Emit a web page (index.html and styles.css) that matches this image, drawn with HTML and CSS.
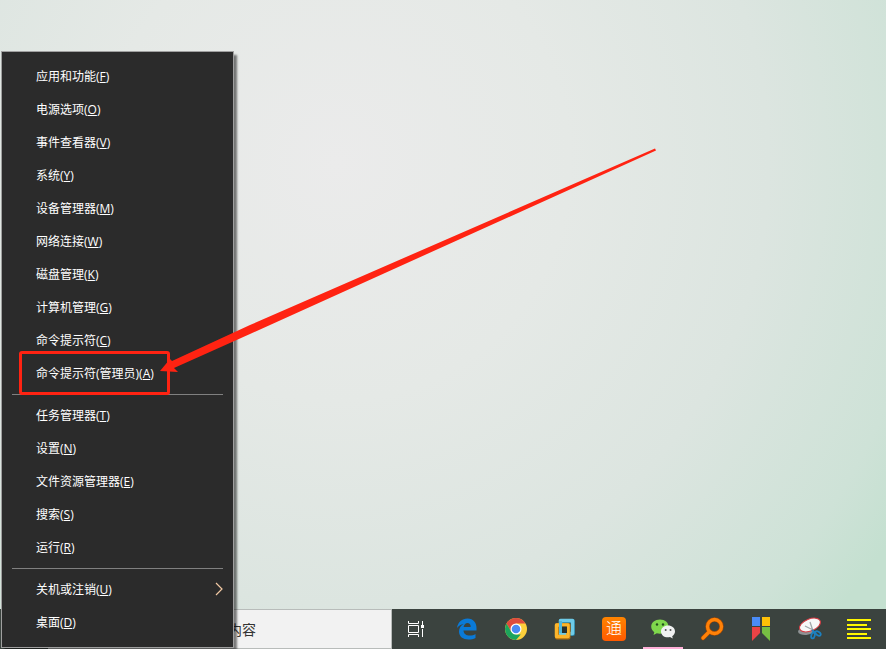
FILE: index.html
```html
<!DOCTYPE html>
<html lang="zh-CN">
<head>
    <meta charset="UTF-8">
    <meta name="viewport" content="width=device-width, initial-scale=1.0">
    <title>桌面</title>
    <link rel="stylesheet" href="styles.css">
</head>
<body>
    <main class="desktop">
        <ul class="menu">
            <li><button type="button">应用和功能(<u>F</u>)</button></li>
            <li><button type="button">电源选项(<u>O</u>)</button></li>
            <li><button type="button">事件查看器(<u>V</u>)</button></li>
            <li><button type="button">系统(<u>Y</u>)</button></li>
            <li><button type="button">设备管理器(<u>M</u>)</button></li>
            <li><button type="button">网络连接(<u>W</u>)</button></li>
            <li><button type="button">磁盘管理(<u>K</u>)</button></li>
            <li><button type="button">计算机管理(<u>G</u>)</button></li>
            <li><button type="button">命令提示符(<u>C</u>)</button></li>
            <li class="marked">
                <button type="button">命令提示符(管理员)(<u>A</u>)</button>
                <svg class="arrow" width="500" height="228" viewBox="157 148 500 228" aria-hidden="true">
                    <path d="M160 371 L170 359 L172 361 L250 325 L655 148.500 L656 150.500 L250 334 L174 368 L178 372 Z" fill="#ff2312"/>
                </svg>
            </li>
            <li class="separator"></li>
            <li><button type="button">任务管理器(<u>T</u>)</button></li>
            <li><button type="button">设置(<u>N</u>)</button></li>
            <li><button type="button">文件资源管理器(<u>E</u>)</button></li>
            <li><button type="button">搜索(<u>S</u>)</button></li>
            <li><button type="button">运行(<u>R</u>)</button></li>
            <li class="separator"></li>
            <li>
                <button type="button">关机或注销(<u>U</u>)
                    <svg class="chevron" width="8" height="14" viewBox="0 0 8 14"><path d="M1 1 L7 7 L1 13" fill="none" stroke="#f3c9a4" stroke-width="1.2"/></svg>
                </button>
            </li>
            <li><button type="button">桌面(<u>D</u>)</button></li>
        </ul>
    </main>

    <footer class="taskbar">
        <input class="search" type="text" aria-label="搜索" placeholder="在这里输入你要搜索的内容">
        <button type="button" class="task" aria-label="任务视图">
            <svg width="18" height="18" viewBox="0 0 18 18" fill="none" stroke="#fff">
                <path d="M1.5 1 V3.5 H11.5 V1 M1.5 17 V14.5 H11.5 V17 M1.5 5.5 H11.5 V12.5 H1.5 Z M15.5 1 V5 M15.5 9 V17"/>
                <path d="M14 5 H17 V8 H14 Z" fill="#fff" stroke="none"/>
            </svg>
        </button>
        <nav class="apps">
            <button type="button" class="task" aria-label="Edge">
                <svg width="22" height="22" viewBox="0 0 22 22">
                    <path d="M1 10 C2 4 6 0.500 11.500 0.500 C17.500 0.500 20.500 5 20.500 10 V12.500 H7.500 C7.700 16 10.500 17.600 13.500 17.600 C16 17.600 18 16.900 19.500 16 V20 C17.500 21.100 15 21.500 12.500 21.500 C7 21.500 3 18.500 3 13.500 C3 10.200 4.800 7.500 7.700 6 C5 6.400 2.700 7.800 1 10 Z M7.600 9 H14.700 C14.700 6.400 13.500 4.900 11.400 4.900 C9.400 4.900 8 6.700 7.600 9 Z" fill="#0a7ad8" fill-rule="evenodd"/>
                </svg>
            </button>
            <button type="button" class="task" aria-label="Chrome">
                <svg width="22" height="22" viewBox="0 0 22 22">
                    <circle cx="11" cy="11" r="11" fill="#fdd03b"/>
                    <path d="M1.500 5.500 A11 11 0 0 1 20.500 5.500 H11 L6.200 13.700 Z" fill="#dd4b3e"/>
                    <path d="M1.500 5.500 L6.200 13.700 L11 16.500 H15.800 L11 22 A11 11 0 0 1 1.500 5.500 Z" fill="#1ca45c"/>
                    <circle cx="11" cy="11" r="5.500" fill="#fff"/>
                    <circle cx="11" cy="11" r="4.300" fill="#4a8af4"/>
                </svg>
            </button>
            <button type="button" class="task" aria-label="VMware">
                <svg width="22" height="22" viewBox="0 0 22 22" fill="none" stroke-linejoin="round">
                    <path d="M7 3 H19 V16 H7 Z" stroke="#2b7f9d" stroke-width="4"/>
                    <path d="M6.500 2.500 H18.500 V15.500 H6.500 Z" stroke="#6ecbe8" stroke-width="3.500"/>
                    <path d="M3 7 H14.500 V19.500 H3 Z" stroke="#b3700f" stroke-width="4"/>
                    <path d="M2.500 7 H14 V18.500 H2.500 Z" stroke="#fcb52b" stroke-width="3.500"/>
                    <path d="M6.500 15 V3" stroke="#4fb6da" stroke-width="3"/>
                    <path d="M8 8.500 H13 V15 H8 Z" fill="#27302e"/>
                </svg>
            </button>
            <button type="button" class="task" aria-label="通"><span class="tong">通</span></button>
            <button type="button" class="task active" aria-label="微信">
                <svg width="24" height="20" viewBox="0 0 24 20">
                    <path d="M9 0.500 C4 0.500 0.200 3.500 0.200 7.600 C0.200 10 1.500 12 3.300 13.200 L2.500 16 L5.800 14.300 C11 16 17.500 13 17.500 7.600 C17.500 3.500 14 0.500 9 0.500 Z" fill="#7fd84c"/>
                    <path d="M17 6.500 C13 6.500 10 9 10 12.500 C10 16.500 14 19.200 19 18.100 L21.800 19.500 L21.200 17.200 C23 16 24 14.400 24 12.500 C24 9 21 6.500 17 6.500 Z" fill="#f0f1f1"/>
                    <circle cx="6" cy="5.500" r="1.200" fill="#24511c"/>
                    <circle cx="12" cy="5.500" r="1.200" fill="#24511c"/>
                    <circle cx="14.700" cy="11" r="1" fill="#555"/>
                    <circle cx="19.500" cy="11" r="1" fill="#555"/>
                </svg>
            </button>
            <button type="button" class="task" aria-label="Everything">
                <svg width="24" height="24" viewBox="0 0 24 24" fill="none" stroke-linecap="round">
                    <path d="M9 15 L3 21" stroke="#a34600" stroke-width="4.500"/>
                    <circle cx="14.500" cy="9.500" r="7" stroke="#a34600" stroke-width="4.500"/>
                    <path d="M9 15 L3 21" stroke="#ff8208" stroke-width="3.300"/>
                    <circle cx="14.500" cy="9.500" r="7" stroke="#ff8208" stroke-width="3.300"/>
                </svg>
            </button>
            <button type="button" class="task" aria-label="书签">
                <svg width="18" height="24" viewBox="0 0 18 24">
                    <path d="M0 0 H8 V9 H0 Z" fill="#4a8cf7"/>
                    <path d="M10 0 H18 V9 H10 Z" fill="#ffc107"/>
                    <path d="M0 10 H8 V16 L0 24 Z" fill="#ea4345"/>
                    <path d="M10 10 H18 V24 L10 16 Z" fill="#77bf43"/>
                </svg>
            </button>
            <button type="button" class="task" aria-label="截图工具">
                <svg width="24" height="24" viewBox="0 0 24 24" fill="none">
                    <ellipse cx="8" cy="14" rx="8" ry="4" transform="rotate(-5 8 14)" fill="#8e9294"/>
                    <ellipse cx="12" cy="8" rx="11" ry="6" transform="rotate(-22 12 8)" fill="#f8f8f8" stroke="#d83a42"/>
                    <path d="M12 5 L15 14 M7 9 L15 13" stroke="#a2a7aa" stroke-width="1.300"/>
                    <ellipse cx="15" cy="18.500" rx="1.700" ry="3" transform="rotate(15 15 18.500)" stroke="#1c80c0" stroke-width="1.800"/>
                    <ellipse cx="20" cy="16.500" rx="1.700" ry="3" transform="rotate(-55 20 16.500)" stroke="#1c80c0" stroke-width="1.800"/>
                    <path d="M14 13 L17 15.500" stroke="#1c80c0" stroke-width="1.700"/>
                </svg>
            </button>
            <button type="button" class="task" aria-label="文本">
                <svg width="24" height="21" viewBox="0 0 24 21">
                    <path d="M0 0 H24 V2 H0 Z M0 5 H20 V7 H0 Z M0 9 H24 V11 H0 Z M0 14 H20 V16 H0 Z M0 18 H24 V20 H0 Z" fill="#fff800"/>
                </svg>
            </button>
        </nav>
    </footer>
</body>
</html>
```

FILE: styles.css
```css
*, *::after {
    box-sizing: border-box;
}
body {
    margin: 0;
    min-height: 100vh;
    display: flex;
    flex-direction: column;
    position: relative;
    overflow: hidden;
    font-family: "Open Sans", "Noto Sans CJK SC", sans-serif;
    background:
        radial-gradient(ellipse 75% 105% at 38% 25%, #ebebeb 0%, #e5e9e6 35%, #dce5e0 65%, #cee2d7 90%, #c4e0d0 100%);
}
.desktop {
    flex: 1;
}
button {
    border: none;
    background: none;
    padding: 0;
    font-family: inherit;
    color: inherit;
}

/* Menu Win+X */
.menu {
    position: absolute;
    left: 1px;
    bottom: 1px;
    z-index: 1;
    width: 233px;
    margin: 0;
    padding: 8px 0;
    list-style: none;
    background-color: #2b2b2b;
    border: 1px solid #a0a0a0;
    box-shadow: 3px 4px 2px rgba(0, 0, 0, 0.5);
    color: #fff;
}
.menu button {
    display: flex;
    align-items: center;
    width: 100%;
    height: 33px;
    padding: 0 10px 1px 34px;
    font-size: 12px;
    text-align: left;
}
.menu button:hover {
    background-color: #414141;
}
.menu u {
    text-underline-offset: 1px;
}
.separator {
    height: 1px;
    margin: 4px 10px;
    background-color: #808080;
}
.chevron {
    margin-left: auto;
}

/* Red frame and arrow */
.marked {
    position: relative;
}
.marked::after {
    content: "";
    position: absolute;
    left: 17px;
    top: -6px;
    width: 151px;
    height: 44px;
    border: 3px solid #ff2312;
    border-radius: 3px;
    pointer-events: none;
}
.arrow {
    position: absolute;
    left: 155px;
    bottom: 14px;
    z-index: 1;
    pointer-events: none;
}

/* Taskbar */
.taskbar {
    display: flex;
    height: 40px;
    padding-left: 48px;
    background-color: #3b433f;
}
.search {
    flex: 0 1 344px;
    min-width: 0;
    padding: 0 39px;
    border: 1px solid #b8bcba;
    border-radius: 0;
    background-color: #f2f2f2;
    font-family: inherit;
    font-size: 14px;
}
.search::placeholder {
    color: #333;
}
.apps {
    display: flex;
    gap: 1px;
    margin-left: 3px;
}
.task {
    display: flex;
    align-items: center;
    justify-content: center;
    flex: none;
    width: 48px;
    height: 40px;
}
.task svg {
    overflow: visible;
}
.task.active {
    background: linear-gradient(#ffb0d8, #ffb0d8) center bottom / 40px 2px no-repeat;
}
.tong {
    width: 24px;
    height: 24px;
    border-radius: 4px;
    background: linear-gradient(#ff8400, #ff5a00);
    color: #fff;
    font-size: 16px;
    font-weight: 300;
    line-height: 23px;
    text-align: center;
}
```
